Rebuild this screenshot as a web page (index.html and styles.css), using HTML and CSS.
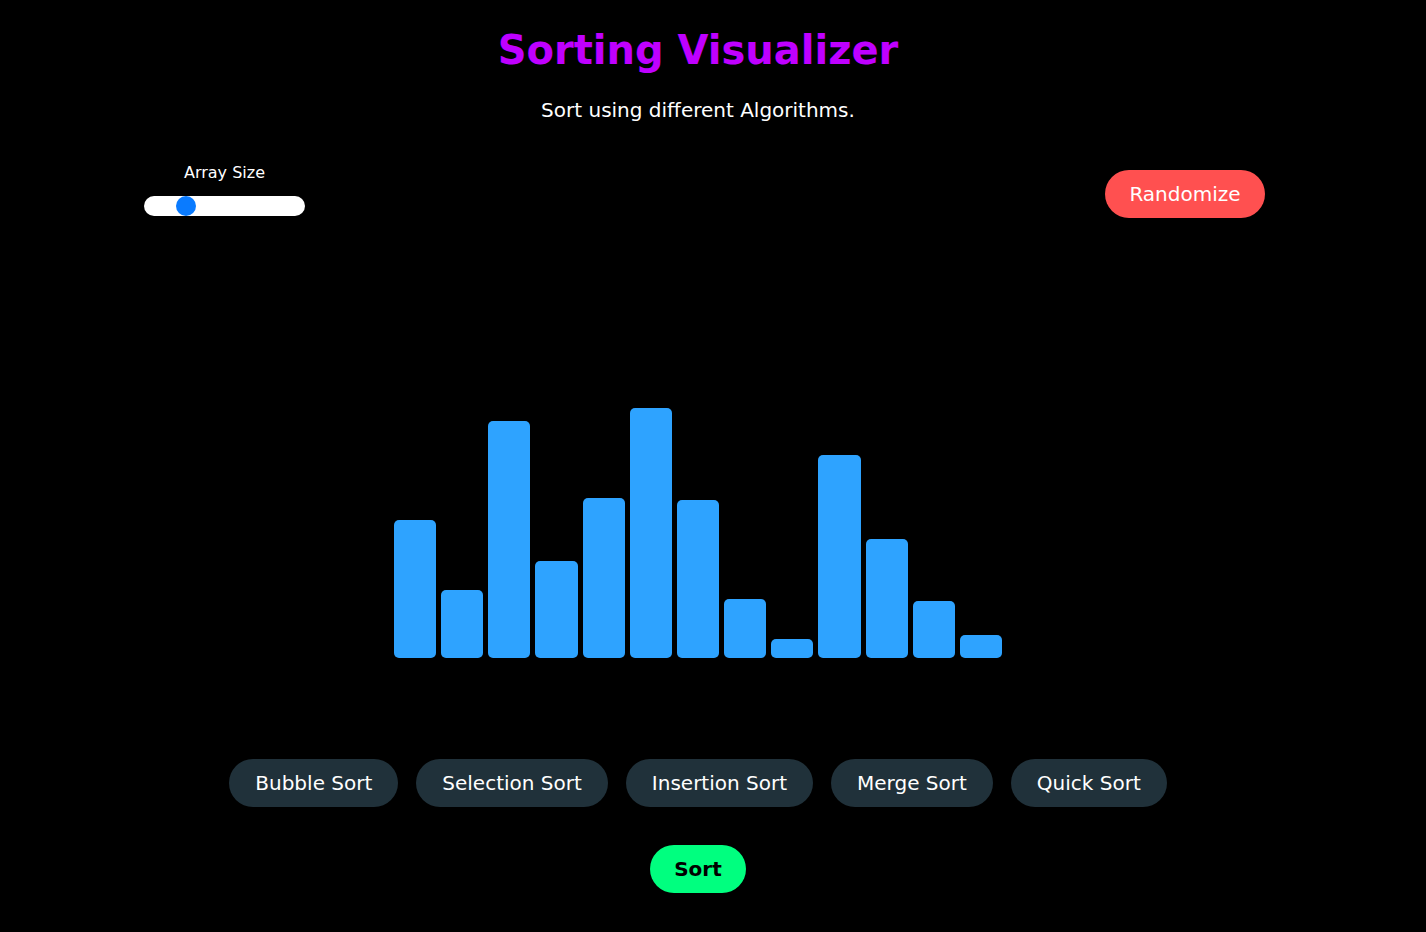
FILE: index.html
```html
<!DOCTYPE html>
<html lang="en">
<head>
<meta charset="utf-8">
<title>Sorting Visualizer</title>
<link rel="stylesheet" href="styles.css">
</head>
<body>
<div class="app">
  <header class="header">
    <h1 class="title">Sorting Visualizer</h1>
    <p class="subtitle">Sort using different Algorithms.</p>
  </header>
  <section class="controls">
    <div class="size-control">
      <label class="size-label" for="size">Array Size</label>
      <input class="size-slider" id="size" type="range" min="0" max="141" value="32">
    </div>
    <button class="btn btn-random">Randomize</button>
  </section>
  <section class="bars">
    <div class="bar" style="height:138px"></div>
    <div class="bar" style="height:68px"></div>
    <div class="bar" style="height:237px"></div>
    <div class="bar" style="height:97px"></div>
    <div class="bar" style="height:160px"></div>
    <div class="bar" style="height:250px"></div>
    <div class="bar" style="height:158px"></div>
    <div class="bar" style="height:59px"></div>
    <div class="bar" style="height:19px"></div>
    <div class="bar" style="height:203px"></div>
    <div class="bar" style="height:119px"></div>
    <div class="bar" style="height:57px"></div>
    <div class="bar" style="height:23px"></div>
  </section>
  <section class="algos">
    <button class="btn btn-algo">Bubble Sort</button>
    <button class="btn btn-algo">Selection Sort</button>
    <button class="btn btn-algo">Insertion Sort</button>
    <button class="btn btn-algo">Merge Sort</button>
    <button class="btn btn-algo">Quick Sort</button>
  </section>
  <div class="sort-row">
    <button class="btn btn-sort">Sort</button>
  </div>
</div>
</body>
</html>
```
FILE: styles.css
```css
html, body {
  margin: 0;
  padding: 0;
  background: #000;
}
body {
  font-family: "DejaVu Sans", Verdana, sans-serif;
  color: #fff;
  height: 932px;
  overflow: hidden;
}
.app {
  width: 1396px;
  display: flex;
  flex-direction: column;
}
.header {
  display: flex;
  flex-direction: column;
  align-items: center;
}
.title {
  margin: 26px 0 0;
  font-size: 40px;
  line-height: 48px;
  font-weight: bold;
  color: #bf00ff;
}
.subtitle {
  margin: 24px 0 0;
  font-size: 20px;
  line-height: 24px;
}
.controls {
  display: flex;
  justify-content: space-between;
  align-items: flex-start;
  padding: 0 131px 0 144px;
  margin-top: 40px;
}
.size-control {
  display: flex;
  flex-direction: column;
  align-items: center;
  width: 161px;
  padding-top: 1px;
}
.size-label {
  font-size: 16px;
  line-height: 20px;
}
.size-slider {
  -webkit-appearance: none;
  appearance: none;
  margin: 13px 0 0;
  width: 161px;
  height: 20px;
  border-radius: 10px;
  background: #fff;
  outline: none;
}
.size-slider::-webkit-slider-thumb {
  -webkit-appearance: none;
  appearance: none;
  width: 20px;
  height: 20px;
  border-radius: 50%;
  background: #0a7bff;
  border: none;
}
.btn {
  font-family: "DejaVu Sans", Verdana, sans-serif;
  font-size: 20px;
  height: 48px;
  border: none;
  border-radius: 24px;
  padding: 0 25px;
  color: #fff;
  cursor: pointer;
}
.btn-random {
  width: 160px;
  padding: 0;
  background: #ff5050;
  margin-top: 8px;
}
.bars {
  display: flex;
  justify-content: center;
  align-items: flex-end;
  gap: 5px;
  height: 250px;
  margin-top: 190px;
}
.bar {
  width: 42.2px;
  background: #2ea3ff;
  border-radius: 5px;
}
.algos {
  display: flex;
  justify-content: center;
  gap: 18px;
  margin-top: 101px;
}
.btn-algo {
  background: #20313a;
  padding: 0 26px;
}
.sort-row {
  display: flex;
  justify-content: center;
  margin-top: 38px;
}
.btn-sort {
  background: #00ff7f;
  color: #000;
  font-weight: bold;
  width: 96px;
  padding: 0;
}
```
